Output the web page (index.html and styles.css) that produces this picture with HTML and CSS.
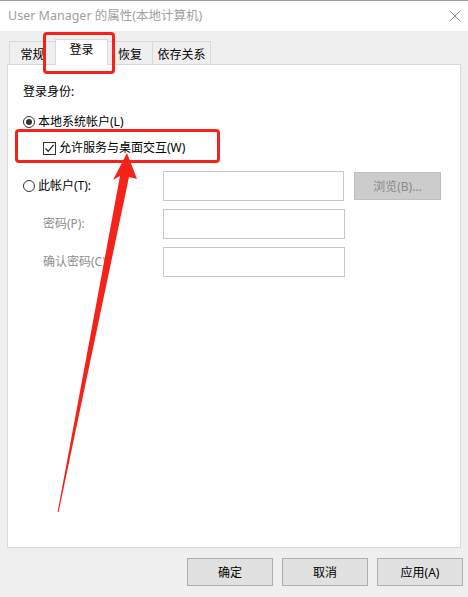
FILE: index.html
```html
<!DOCTYPE html>
<html lang="zh-CN">
<head>
<meta charset="utf-8">
<title>User Manager 的属性</title>
<link rel="stylesheet" href="styles.css">
</head>
<body>
<div class="window">
  <div class="titlebar">
    <span class="title">User Manager 的属性(本地计算机)</span>
    <svg class="close" width="12" height="12" viewBox="0 0 12 12"><path d="M0.5 0.5 L11.5 11.5 M11.5 0.5 L0.5 11.5" stroke="#8a8a8a" stroke-width="1" fill="none"/></svg>
  </div>
  <div class="body">
    <div class="tabs">
      <div class="tab t1">常规</div>
      <div class="tab t2 active">登录</div>
      <div class="tab t3">恢复</div>
      <div class="tab t4">依存关系</div>
    </div>
    <div class="panel">
      <div class="heading">登录身份:</div>
      <div class="opt radio-row">
        <span class="radio checked"></span><span>本地系统帐户(L)</span>
      </div>
      <div class="opt check-row">
        <span class="checkbox"><svg width="11" height="11" viewBox="0 0 11 11"><path d="M1.5 5.5 L4.2 8.3 L9.6 1.8" stroke="#222" stroke-width="1.2" fill="none"/></svg></span><span>允许服务与桌面交互(W)</span>
      </div>
      <div class="account">
        <div class="lab"><span class="radio"></span><span>此帐户(T):</span></div>
        <div class="field f1"></div>
        <div class="browse">浏览(B)...</div>
        <div class="lab sub disabled">密码(P):</div>
        <div class="field f2"></div>
        <div></div>
        <div class="lab sub disabled">确认密码(C):</div>
        <div class="field f2"></div>
        <div></div>
      </div>
    </div>
    <div class="buttons">
      <div class="btn">确定</div>
      <div class="btn">取消</div>
      <div class="btn">应用(A)</div>
    </div>
  </div>
  <div class="mark mark-tab"></div>
  <div class="mark mark-check"></div>
  <svg class="arrow" width="468" height="597" viewBox="0 0 468 597">
    <polygon points="127,153 137,179 129,177 58.6,512 57.6,512 120,176 113,180" fill="#f5221a"/>
  </svg>
</div>
</body>
</html>
```

FILE: styles.css
```css
* { box-sizing: border-box; }
html, body { margin: 0; padding: 0; }
body {
  width: 468px;
  height: 597px;
  overflow: hidden;
  font-family: "Noto Sans", "Noto Sans CJK SC", sans-serif;
  font-size: 12px;
  color: #000;
  background: #efefef;
}
.window {
  position: relative;
  width: 468px;
  height: 597px;
  display: flex;
  flex-direction: column;
}
.titlebar {
  height: 31px;
  background: #fff;
  border-top: 1px solid #9c9c9c;
  display: flex;
  align-items: center;
  justify-content: space-between;
  padding: 0 7px 0 8px;
  flex: none;
}
.title {
  color: #a0a0a0;
  font-size: 12.5px;
  line-height: 16px;
}
.close { display: block; }
.body {
  flex: 1;
  background: #efefef;
  display: flex;
  flex-direction: column;
  padding-top: 9px;
}
.tabs {
  display: flex;
  align-items: flex-end;
  padding-left: 9px;
  height: 24px;
  position: relative;
  z-index: 2;
}
.tab {
  height: 23px;
  border: 1px solid #d9d9d9;
  border-bottom: none;
  background: #efefef;
  text-align: center;
  line-height: 22px;
  padding-top: 2px;
  margin-left: -1px;
}
.tab.t1 { width: 47px; margin-left: 0; }
.tab.t2 { width: 53px; }
.tab.t3 { width: 46px; }
.tab.t4 { width: 59px; }
.tab.active {
  background: #fff;
  height: 26px;
  margin-bottom: -1px;
  line-height: 20px;
  padding-top: 0;
  position: relative;
  z-index: 3;
}
.panel {
  margin: 0 7px;
  height: 484px;
  background: #fff;
  border: 1px solid #d9d9d9;
  padding: 19px 0 0 15px;
  position: relative;
  z-index: 1;
}
.heading { line-height: 16px; }
.opt {
  display: flex;
  align-items: center;
  line-height: 16px;
}
.radio-row { margin-top: 14px; }
.check-row { margin-top: 10px; padding-left: 20px; }
.radio {
  width: 12px;
  height: 12px;
  border: 1px solid #333;
  border-radius: 50%;
  margin-right: 3px;
  flex: none;
  position: relative;
  background: #fff;
}
.radio.checked::after {
  content: "";
  position: absolute;
  left: 2px;
  top: 2px;
  width: 6px;
  height: 6px;
  border-radius: 50%;
  background: #333;
}
.checkbox {
  width: 13px;
  height: 13px;
  border: 1px solid #333;
  margin-right: 3px;
  flex: none;
  display: flex;
  align-items: center;
  justify-content: center;
  background: #fff;
}
.checkbox svg { display: block; }
.account {
  margin-top: 15px;
  display: grid;
  grid-template-columns: 140px 182px 96px;
  grid-auto-rows: 30px;
  row-gap: 8px;
}
.lab {
  display: flex;
  align-items: center;
  line-height: 16px;
}
.lab.sub { padding-left: 20px; }
.disabled { color: #8d8d8d; }
.field {
  border: 1px solid #c8c8c8;
  background: #fff;
  height: 30px;
}
.field.f1 { width: 181px; }
.field.f2 { width: 182px; }
.browse {
  margin-left: 9px;
  margin-top: 1px;
  width: 87px;
  height: 28px;
  background: #cccccc;
  border: 1px solid #bfbfbf;
  color: #8a8a8a;
  display: flex;
  align-items: center;
  justify-content: center;
}
.buttons {
  display: flex;
  justify-content: flex-end;
  gap: 9px;
  padding: 10px 5px 0 0;
}
.btn {
  width: 86px;
  height: 28px;
  background: #e1e1e1;
  border: 1px solid #adadad;
  display: flex;
  align-items: center;
  justify-content: center;
}
.mark {
  position: absolute;
  border: 3px solid #f5221a;
  border-radius: 4px;
  z-index: 5;
  pointer-events: none;
}
.mark-tab { left: 43px; top: 32px; width: 72px; height: 42px; }
.mark-check { left: 15px; top: 129px; width: 205px; height: 34px; }
.arrow {
  position: absolute;
  left: 0;
  top: 0;
  z-index: 6;
  pointer-events: none;
}
```
